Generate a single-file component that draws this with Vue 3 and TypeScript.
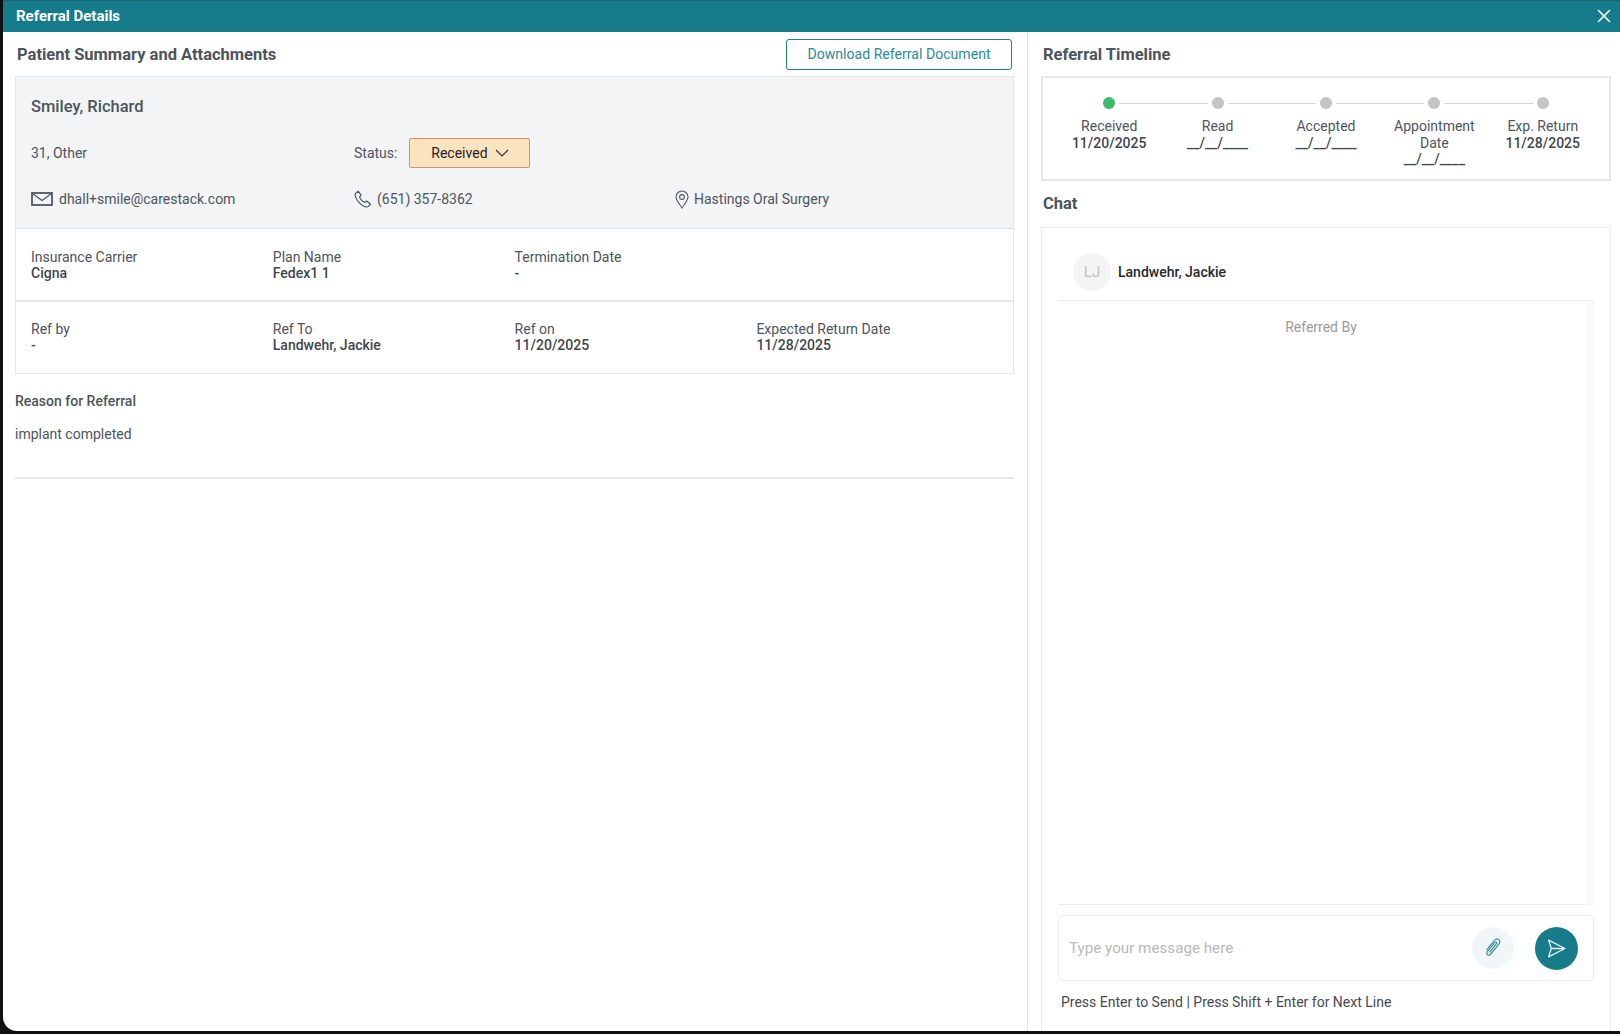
<template>
  <div class="screen">
    <div class="modal">
      <header class="modal-head">
        <span>Referral Details</span>
        <button class="close" aria-label="Close">
          <svg width="16" height="16" viewBox="0 0 16 16"><path d="M2 2l12 12M14 2L2 14" stroke="#fff" stroke-width="1.7" fill="none" /></svg>
        </button>
      </header>

      <div class="modal-body">
        <section class="left">
          <div class="left-title">
            <h2>Patient Summary and Attachments</h2>
            <button class="download">Download Referral Document</button>
          </div>

          <div class="card">
            <div class="patient">
              <div class="patient-name">Smiley, Richard</div>
              <div class="patient-row status-row">
                <div>31, Other</div>
                <div class="status">
                  <span>Status:</span>
                  <button class="status-btn">
                    Received
                    <svg width="14" height="8" viewBox="0 0 14 8"><path d="M1 1l6 6 6-6" stroke="#333" stroke-width="1.2" fill="none" /></svg>
                  </button>
                </div>
                <div></div>
              </div>
              <div class="patient-row contact-row">
                <div class="contact">
                  <svg width="22" height="14" viewBox="0 0 22 14"><rect x="1" y="1" width="20" height="12" fill="none" stroke="#4f5862" stroke-width="1.8" /><path d="M1.500 1.500L11 8.500l9.500-7" fill="none" stroke="#4f5862" stroke-width="1.400" /></svg>
                  <span>dhall+smile@carestack.com</span>
                </div>
                <div class="contact">
                  <svg width="18" height="18" viewBox="0 0 18 18"><path d="M4.200 1.200L1.600 3.400c-.6.600-.6 1.800-.2 3 1.700 4.800 5.300 8.700 9.800 10.300 1.200.4 2.300.3 3-.3l2.300-2.200-3.800-3.200-1.900 1.500C8.300 11.500 6.500 9.500 5.400 7.100l1.700-2z" fill="none" stroke="#4f5862" stroke-width="1.200" stroke-linejoin="round" /></svg>
                  <span>(651) 357-8362</span>
                </div>
                <div class="contact">
                  <svg width="14" height="19" viewBox="0 0 14 19"><path d="M7 18C4.500 14 1 10.500 1 7a6 6 0 0 1 12 0c0 3.500-3.500 7-6 11z" fill="none" stroke="#4f5862" stroke-width="1.100" /><circle cx="7" cy="7" r="2.400" fill="none" stroke="#4f5862" stroke-width="1.100" /></svg>
                  <span>Hastings Oral Surgery</span>
                </div>
              </div>
            </div>

            <div v-for="(row, i) in infoRows" :key="i" class="info-row">
              <div v-for="item in row" :key="item.label" class="info">
                <div class="info-label">{{ item.label }}</div>
                <div class="info-value">{{ item.value }}</div>
              </div>
            </div>
          </div>

          <div class="reason">
            <div class="reason-title">Reason for Referral</div>
            <div class="reason-text">implant completed</div>
          </div>
        </section>

        <section class="right">
          <h2 class="timeline-title">Referral Timeline</h2>
          <div class="timeline">
            <div v-for="(step, i) in steps" :key="step.label" class="step">
              <div class="track">
                <span class="line before" :class="{ blank: i === 0 }"></span>
                <span class="dot" :class="{ done: step.done }"></span>
                <span class="line after" :class="{ blank: i === steps.length - 1 }"></span>
              </div>
              <div class="step-label">{{ step.label }}</div>
              <div class="step-date">{{ step.date }}</div>
            </div>
          </div>

          <h2 class="chat-title">Chat</h2>
          <div class="chat">
            <div class="chat-head">
              <span class="avatar">LJ</span>
              <span class="chat-name">Landwehr, Jackie</span>
            </div>
            <div class="messages">
              <div class="messages-inner">Referred By</div>
            </div>
            <div class="composer">
              <input class="composer-input" placeholder="Type your message here" />
              <button class="attach" aria-label="Attach">
                <svg width="20" height="22" viewBox="0 0 18 20"><path d="M3.400 11.500l6.800-8.300c1.300-1.500 3-1.700 4.100-.8 1.200 1 1.200 2.600 0 4.100l-7.300 9c-.9 1.100-2.200 1.300-3 .6-.9-.7-.9-1.900 0-3l6.500-8c.5-.6 1.100-.7 1.500-.4.500.4.400 1 0 1.600L6 13.800" fill="none" stroke="#2f8594" stroke-width="1" stroke-linecap="round" /></svg>
              </button>
              <button class="send" aria-label="Send">
                <svg width="21" height="21" viewBox="0 0 20 20"><path d="M2.500 2L18 10 2.500 18 5 10zM5 10h13" fill="none" stroke="#e6f3f5" stroke-width="1.200" stroke-linejoin="round" /></svg>
              </button>
            </div>
            <div class="hint">Press Enter to Send | Press Shift + Enter for Next Line</div>
          </div>
        </section>
      </div>
    </div>
  </div>
</template>

<script setup lang="ts">
const infoRows = [
  [
    { label: "Insurance Carrier", value: "Cigna" },
    { label: "Plan Name", value: "Fedex1 1" },
    { label: "Termination Date", value: "-" }
  ],
  [
    { label: "Ref by", value: "-" },
    { label: "Ref To", value: "Landwehr, Jackie" },
    { label: "Ref on", value: "11/20/2025" },
    { label: "Expected Return Date", value: "11/28/2025" }
  ]
];

const steps = [
  { label: "Received", date: "11/20/2025", done: true },
  { label: "Read", date: "__/__/____", done: false },
  { label: "Accepted", date: "__/__/____", done: false },
  { label: "Appointment Date", date: "__/__/____", done: false },
  { label: "Exp. Return", date: "11/28/2025", done: false }
];
</script>

<style>
html,
body {
  margin: 0;
  background: #111;
}
</style>

<style scoped>
.screen {
  height: 1034px;
  padding: 0 0 3px 3px;
  box-sizing: border-box;
  font-family: Roboto, "Liberation Sans", sans-serif;
  font-size: 14px;
  color: #4d545c;
  overflow: hidden;
}

.modal {
  height: 100%;
  display: flex;
  flex-direction: column;
  background: #fff;
  border-radius: 0 0 0 14px;
  overflow: hidden;
}

button {
  font-family: inherit;
  cursor: pointer;
}

.modal-head {
  height: 32px;
  flex: none;
  box-sizing: border-box;
  border-top: 1px solid #1f6270;
  padding: 0 8px 2px 13px;
  display: flex;
  align-items: center;
  justify-content: space-between;
  background: #167c8b;
  color: #fff;
  font-size: 15px;
  font-weight: 700;
}

.close {
  border: 0;
  background: none;
  padding: 0;
  height: 16px;
}

.modal-body {
  flex: 1;
  min-height: 0;
  display: flex;
}

h2 {
  margin: 0;
  font-size: 16.500px;
  font-weight: 700;
  color: #4d545c;
}

.left {
  width: 1025px;
  flex: none;
  box-sizing: border-box;
  border-right: 1px solid #e4e4e4;
  padding: 0 13px 0 12px;
}

.left-title {
  height: 44px;
  padding: 7px 2px 0 2px;
  box-sizing: border-box;
  display: flex;
  align-items: flex-start;
  justify-content: space-between;
}

.left-title h2 {
  line-height: 31px;
}

.download {
  width: 226px;
  height: 31px;
  padding: 0 0 2px;
  background: #fff;
  border: 1px solid #1f7f8e;
  border-radius: 3px;
  color: #2f8a98;
  font-size: 14.100px;
}

.card {
  border: 1px solid #e6e6e6;
}

.patient {
  height: 152px;
  box-sizing: border-box;
  background: #f2f4f6;
  border-bottom: 1px solid #dedfe0;
  padding: 18px 15px 0;
}

.patient-name {
  font-size: 16.500px;
  font-weight: 500;
  line-height: 24px;
}

.patient-row {
  display: grid;
  grid-template-columns: 323px 321px 1fr;
  align-items: center;
}

.status-row {
  margin-top: 19px;
  height: 30px;
}

.status {
  display: flex;
  align-items: center;
  gap: 12px;
}

.status-btn {
  width: 121px;
  height: 30px;
  display: flex;
  align-items: center;
  justify-content: center;
  gap: 7px;
  background: #fbe3c0;
  border: 1px solid #e08a72;
  border-radius: 2px;
  color: #222;
  font-size: 14px;
}

.contact-row {
  margin-top: 21px;
  height: 20px;
}

.contact {
  display: flex;
  align-items: center;
  gap: 5px;
}

.contact:first-child {
  gap: 6px;
}

.info-row {
  height: 73px;
  box-sizing: border-box;
  padding: 20px 15px 0;
  display: grid;
  grid-template-columns: repeat(4, 241.800px);
  border-bottom: 2px solid #e8e8e8;
  line-height: 16px;
}

.info-row:last-child {
  border-bottom: 0;
  height: 71px;
  padding-top: 19px;
}

.info-value {
  font-weight: 500;
  color: #3f464d;
}

.reason {
  height: 105px;
  box-sizing: border-box;
  border-bottom: 2px solid #e6e6e6;
  padding-top: 19px;
  line-height: 16px;
}

.reason-title {
  font-weight: 500;
}

.reason-text {
  margin-top: 17px;
}

.right {
  flex: 1;
  min-width: 0;
  display: flex;
  flex-direction: column;
  padding: 0 9px 0 13px;
}

.timeline-title {
  height: 44px;
  line-height: 45px;
  flex: none;
  padding-left: 2px;
}

.timeline {
  height: 105px;
  flex: none;
  box-sizing: border-box;
  border: 2px solid #e9e9e9;
  display: grid;
  grid-template-columns: repeat(5, 108.400px);
  padding: 18px 12px 0;
}

.step {
  text-align: center;
  line-height: 16.500px;
  color: #4d545c;
}

.track {
  height: 14px;
  display: flex;
  align-items: center;
  margin-bottom: 8px;
}

.line {
  flex: 1;
  height: 1px;
  background: #d4d4d4;
}

.line.before {
  margin-right: 4px;
}

.line.after {
  margin-left: 4px;
}

.line.blank {
  background: none;
}

.dot {
  width: 12px;
  height: 12px;
  flex: none;
  border-radius: 50%;
  background: #c4c4c4;
}

.dot.done {
  background: #3dba72;
}

.step-date {
  font-weight: 500;
  color: #3f464d;
}

.chat-title {
  height: 46px;
  line-height: 46px;
  flex: none;
  padding-left: 2px;
}

.chat {
  flex: 1;
  min-height: 0;
  display: flex;
  flex-direction: column;
  border: 1px solid #ececec;
  border-bottom: 0;
  padding: 0 16px 21px;
}

.chat-head {
  height: 73px;
  flex: none;
  box-sizing: border-box;
  border-bottom: 1px solid #ececec;
  padding: 15px 0 0 15px;
  display: flex;
  align-items: center;
  gap: 7px;
  margin-right: -1px;
}

.avatar {
  width: 38px;
  height: 38px;
  border-radius: 50%;
  background: #f4f4f4;
  color: #c2c2c2;
  font-size: 15px;
  display: flex;
  align-items: center;
  justify-content: center;
}

.chat-name {
  font-weight: 500;
  color: #25292d;
}

.messages {
  flex: 1;
  min-height: 0;
  border-bottom: 1px solid #ececec;
  border-right: 9px solid #fafafa;
  margin-right: -1px;
}

.messages-inner {
  padding: 18px 2px 0 0;
  text-align: center;
  color: #9b9b9b;
  line-height: 16px;
}

.composer {
  height: 66px;
  flex: none;
  box-sizing: border-box;
  margin-top: 10px;
  border: 1px solid #ececec;
  border-radius: 5px;
  display: flex;
  align-items: center;
  padding: 0 15px 0 10px;
}

.composer-input {
  flex: 1;
  min-width: 0;
  border: 0;
  outline: 0;
  padding: 0;
  font: inherit;
  font-size: 15.200px;
  color: #333;
}

.composer-input::placeholder {
  color: #b9b9b9;
  opacity: 1;
}

.attach,
.send {
  border: 0;
  padding: 0;
  border-radius: 50%;
  display: flex;
  align-items: center;
  justify-content: center;
}

.attach {
  width: 42px;
  height: 42px;
  background: #f1f7f9;
  margin-right: 21px;
}

.send {
  width: 43px;
  height: 43px;
  background: #187b8a;
}

.hint {
  flex: none;
  padding: 13px 0 0 3px;
  line-height: 16px;
  color: #444a50;
}
</style>
